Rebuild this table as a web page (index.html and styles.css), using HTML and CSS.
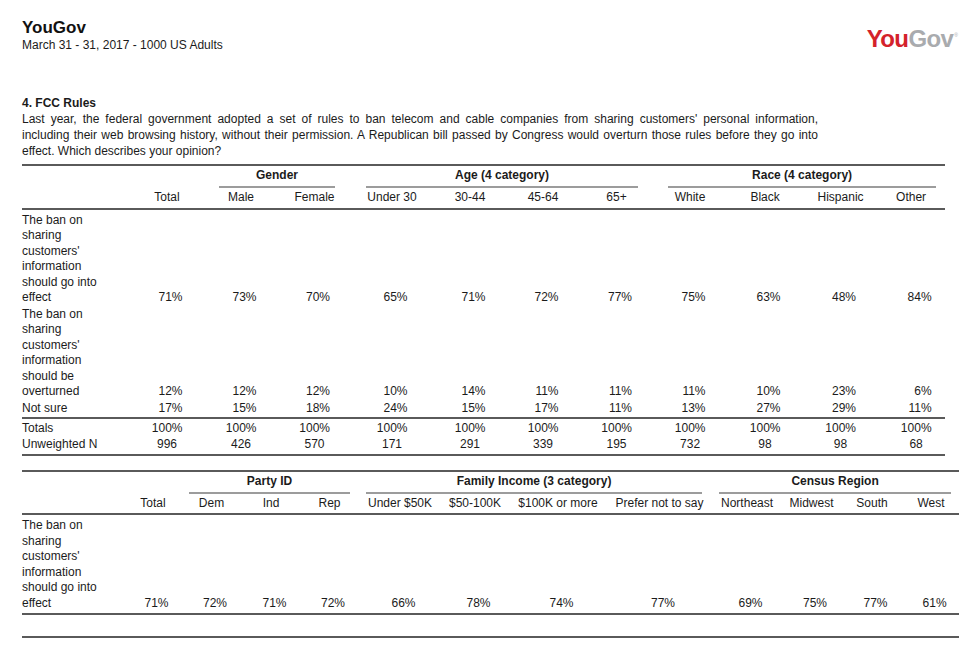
FILE: index.html
```html
<!DOCTYPE html>
<html lang="en">
<head>
<meta charset="utf-8">
<title>YouGov - FCC Rules</title>
<link rel="stylesheet" href="styles.css">
</head>
<body>
<div class="page">
  <header class="top">
    <div class="brand">
      <div class="title">YouGov</div>
      <div class="sub">March 31 - 31, 2017 - 1000 US Adults</div>
    </div>
    <div class="logo"><span class="you">You</span><span class="gov">Gov</span><span class="reg">®</span></div>
  </header>

  <section class="question">
    <h2 class="qtitle">4. FCC Rules</h2>
    <p class="qtext">
      <span class="jl">Last year, the federal government adopted a set of rules to ban telecom and cable companies from sharing customers' personal information,</span>
      <span class="jl">including their web browsing history, without their permission. A Republican bill passed by Congress would overturn those rules before they go into</span>
      <span class="ln">effect. Which describes your opinion?</span>
    </p>
  </section>

  <table class="xt t1">
    <colgroup>
      <col><col><col><col><col><col><col><col><col><col><col><col>
    </colgroup>
    <thead>
      <tr class="grp">
        <th></th>
        <th></th>
        <th colspan="2"><div class="gl g-gender">Gender</div></th>
        <th colspan="4"><div class="gl g-age">Age (4 category)</div></th>
        <th colspan="4"><div class="gl g-race">Race (4 category)</div></th>
      </tr>
      <tr class="colhdr">
        <th></th>
        <th>Total</th>
        <th>Male</th>
        <th>Female</th>
        <th>Under 30</th>
        <th>30-44</th>
        <th>45-64</th>
        <th>65+</th>
        <th>White</th>
        <th>Black</th>
        <th>Hispanic</th>
        <th class="last">Other</th>
      </tr>
    </thead>
    <tbody>
      <tr class="first">
        <td class="stub"><div class="lbl">The ban on sharing customers' information should go into effect</div></td>
        <td><span class="v">71%</span></td>
        <td><span class="v">73%</span></td>
        <td><span class="v">70%</span></td>
        <td><span class="v">65%</span></td>
        <td><span class="v">71%</span></td>
        <td><span class="v">72%</span></td>
        <td><span class="v">77%</span></td>
        <td><span class="v">75%</span></td>
        <td><span class="v">63%</span></td>
        <td><span class="v">48%</span></td>
        <td class="last"><span class="v">84%</span></td>
      </tr>
      <tr>
        <td class="stub"><div class="lbl">The ban on sharing customers' information should be overturned</div></td>
        <td><span class="v">12%</span></td>
        <td><span class="v">12%</span></td>
        <td><span class="v">12%</span></td>
        <td><span class="v">10%</span></td>
        <td><span class="v">14%</span></td>
        <td><span class="v">11%</span></td>
        <td><span class="v">11%</span></td>
        <td><span class="v">11%</span></td>
        <td><span class="v">10%</span></td>
        <td><span class="v">23%</span></td>
        <td class="last"><span class="v">6%</span></td>
      </tr>
      <tr class="lastrow">
        <td class="stub"><div class="lbl">Not sure</div></td>
        <td><span class="v">17%</span></td>
        <td><span class="v">15%</span></td>
        <td><span class="v">18%</span></td>
        <td><span class="v">24%</span></td>
        <td><span class="v">15%</span></td>
        <td><span class="v">17%</span></td>
        <td><span class="v">11%</span></td>
        <td><span class="v">13%</span></td>
        <td><span class="v">27%</span></td>
        <td><span class="v">29%</span></td>
        <td class="last"><span class="v">11%</span></td>
      </tr>
      <tr class="totals">
        <td class="stub"><div class="lbl">Totals</div></td>
        <td><span class="v">100%</span></td>
        <td><span class="v">100%</span></td>
        <td><span class="v">100%</span></td>
        <td><span class="v">100%</span></td>
        <td><span class="v">100%</span></td>
        <td><span class="v">100%</span></td>
        <td><span class="v">100%</span></td>
        <td><span class="v">100%</span></td>
        <td><span class="v">100%</span></td>
        <td><span class="v">100%</span></td>
        <td class="last"><span class="v">100%</span></td>
      </tr>
      <tr class="nrow">
        <td class="stub"><div class="lbl">Unweighted N</div></td>
        <td>996</td>
        <td>426</td>
        <td>570</td>
        <td>171</td>
        <td>291</td>
        <td>339</td>
        <td>195</td>
        <td>732</td>
        <td>98</td>
        <td>98</td>
        <td class="last">68</td>
      </tr>
    </tbody>
  </table>

  <table class="xt t2">
    <colgroup>
      <col><col><col><col><col><col><col><col><col><col><col><col><col>
    </colgroup>
    <thead>
      <tr class="grp">
        <th></th>
        <th></th>
        <th colspan="3"><div class="gl g-party">Party ID</div></th>
        <th colspan="4"><div class="gl g-income">Family Income (3 category)</div></th>
        <th colspan="4"><div class="gl g-region">Census Region</div></th>
      </tr>
      <tr class="colhdr">
        <th></th>
        <th>Total</th>
        <th>Dem</th>
        <th>Ind</th>
        <th>Rep</th>
        <th>Under $50K</th>
        <th>$50-100K</th>
        <th>$100K or more</th>
        <th>Prefer not to say</th>
        <th>Northeast</th>
        <th>Midwest</th>
        <th>South</th>
        <th>West</th>
      </tr>
    </thead>
    <tbody>
      <tr class="first single">
        <td class="stub"><div class="lbl">The ban on sharing customers' information should go into effect</div></td>
        <td><span class="v">71%</span></td>
        <td><span class="v">72%</span></td>
        <td><span class="v">71%</span></td>
        <td><span class="v">72%</span></td>
        <td><span class="v">66%</span></td>
        <td><span class="v">78%</span></td>
        <td><span class="v">74%</span></td>
        <td><span class="v">77%</span></td>
        <td><span class="v">69%</span></td>
        <td><span class="v">75%</span></td>
        <td><span class="v">77%</span></td>
        <td><span class="v">61%</span></td>
      </tr>
    </tbody>
  </table>

  <div class="next-rule"></div>
</div>
</body>
</html>
```

FILE: styles.css
```css
html, body {
  margin: 0;
  padding: 0;
  background: #ffffff;
}

body {
  font-family: "Liberation Sans", Arial, Helvetica, sans-serif;
  font-size: 12px;
  color: #1b1b1b;
}

.page {
  padding: 18px 22px 0 22px;
}

/* ---------- header ---------- */
.top {
  display: flex;
  justify-content: space-between;
  align-items: flex-start;
}

.title {
  font-size: 17px;
  font-weight: bold;
  line-height: 20px;
  color: #111;
}

.sub {
  font-size: 12px;
  line-height: 15px;
}

.logo {
  margin-top: 9px;
  margin-right: 0;
  font-size: 24px;
  line-height: 24px;
  font-weight: bold;
  letter-spacing: -0.6px;
  display: flex;
  align-items: flex-start;
}

.logo .you {
  color: #d4222b;
}

.logo .gov {
  color: #a9abae;
}

.logo .reg {
  font-size: 5px;
  line-height: 5px;
  color: #a9abae;
  font-weight: normal;
  margin-top: 6px;
  margin-left: 1px;
  letter-spacing: 0;
}

/* ---------- question ---------- */
.question {
  margin-top: 42px;
}

.qtitle {
  margin: 0;
  font-size: 12px;
  line-height: 16px;
  font-weight: bold;
}

.qtext {
  margin: 0;
  width: 796px;
  line-height: 16px;
}

.qtext .jl {
  display: block;
  text-align: justify;
  text-align-last: justify;
}

.qtext .ln {
  display: block;
}

/* ---------- crosstabs ---------- */
.xt {
  border-collapse: separate;
  border-spacing: 0;
  table-layout: fixed;
  border-top: 2px solid #5a5a5a;
  border-bottom: 2px solid #5a5a5a;
  line-height: 15.5px;
  font-size: 12px;
}

.t1 {
  width: 923px;
  margin-top: 5px;
}

.t2 {
  width: 937px;
  margin-top: 14px;
}

.xt th,
.xt td {
  padding: 0;
  text-align: center;
  font-weight: normal;
  white-space: nowrap;
}

.xt .grp th {
  padding-top: 2px;
  font-weight: bold;
  vertical-align: bottom;
}

.gl {
  border-bottom: 2px solid #9c9c9c;
  padding-bottom: 2.5px;
}

.g-gender { margin: 0 16px 0 15px; }
.g-age    { margin: 0 16px 0 15px; }
.g-race   { margin: 0 9px 0 14px; }
.g-party  { margin: 0 9px 0 8px; }
.g-income { margin: 0 10px 0 7px; }
.g-region { margin: 0 8px 0 7px; }

.xt .colhdr th {
  padding: 2px 0 2px 0;
  border-bottom: 2px solid #5a5a5a;
}

.xt td {
  vertical-align: bottom;
  padding: 0.5px 0 0.5px 0;
}

.xt td.stub {
  text-align: left;
  vertical-align: top;
  white-space: normal;
}

.lbl {
  width: 92px;
}

.xt tr.first td {
  padding-top: 3px;
}

.xt tr.lastrow td {
  padding-bottom: 0.5px;
}

.xt tr.single td {
  padding-bottom: 2px;
}

.xt tr.totals td {
  border-top: 2px solid #5a5a5a;
  padding-top: 2px;
}

.xt tr.nrow td {
  padding-bottom: 1px;
}

.v {
  display: inline-block;
  width: 31px;
  text-align: right;
}

/* table 1 column widths */
.t1 col:nth-child(1)  { width: 108px; }
.t1 col:nth-child(2)  { width: 74px; }
.t1 col:nth-child(3)  { width: 74px; }
.t1 col:nth-child(4)  { width: 73px; }
.t1 col:nth-child(5)  { width: 82px; }
.t1 col:nth-child(6)  { width: 74px; }
.t1 col:nth-child(7)  { width: 72px; }
.t1 col:nth-child(8)  { width: 75px; }
.t1 col:nth-child(9)  { width: 72px; }
.t1 col:nth-child(10) { width: 78px; }
.t1 col:nth-child(11) { width: 73px; }
.t1 col:nth-child(12) { width: 68px; }

.t1 .last {
  padding-left: 10px;
}

/* table 2 column widths */
.t2 col:nth-child(1)  { width: 103px; }
.t2 col:nth-child(2)  { width: 56px; }
.t2 col:nth-child(3)  { width: 61px; }
.t2 col:nth-child(4)  { width: 58px; }
.t2 col:nth-child(5)  { width: 59px; }
.t2 col:nth-child(6)  { width: 82px; }
.t2 col:nth-child(7)  { width: 68px; }
.t2 col:nth-child(8)  { width: 98px; }
.t2 col:nth-child(9)  { width: 105px; }
.t2 col:nth-child(10) { width: 70px; }
.t2 col:nth-child(11) { width: 59px; }
.t2 col:nth-child(12) { width: 62px; }
.t2 col:nth-child(13) { width: 56px; }

.next-rule {
  width: 937px;
  margin-top: 21px;
  border-top: 2px solid #5a5a5a;
}
```
